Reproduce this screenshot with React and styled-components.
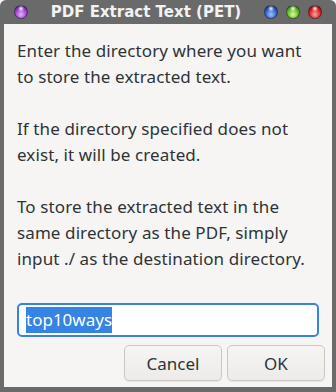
import React from 'react';
import styled, { createGlobalStyle } from 'styled-components';

const GlobalStyle = createGlobalStyle`
  html, body {
    margin: 0;
    padding: 0;
    background: #ffffff;
  }
  #root {
    width: 336px;
    height: 392px;
  }
`;

const Frame = styled.div`
  display: flex;
  flex-direction: column;
  width: 336px;
  height: 392px;
  background: #6a6a6a;
  border-radius: 6px 6px 0 0;
  box-sizing: border-box;
  padding: 0 4px 5px 4px;
`;

const TitleBar = styled.div`
  display: flex;
  align-items: center;
  height: 24px;
  flex-shrink: 0;
  padding: 0 10px 0 10px;
`;

const Title = styled.div`
  flex: 1;
  text-align: center;
  font-family: "DejaVu Sans", sans-serif;
  font-weight: bold;
  font-size: 15px;
  color: #f2f2f2;
  white-space: nowrap;
`;

const Lights = styled.div`
  display: flex;
  gap: 8px;
`;

const palette = {
  purple: ['#e6b3ff', '#9a3fd0', '#4d1470'],
  blue: ['#9fc3ff', '#2f5fc8', '#10266a'],
  green: ['#d8ff9c', '#62b61e', '#2a5a08'],
  red: ['#ffa3a3', '#d71f1f', '#6a0808'],
};

const Light = styled.span`
  display: block;
  flex-shrink: 0;
  width: 14px;
  height: 14px;
  border-radius: 50%;
  box-sizing: border-box;
  border: 1px solid rgba(30, 30, 30, 0.55);
  background:
    radial-gradient(circle at 50% 22%, rgba(255,255,255,0.95) 0, rgba(255,255,255,0.2) 22%, rgba(255,255,255,0) 32%),
    radial-gradient(circle at 50% 70%, ${p => palette[p.$c][0]} 0, ${p => palette[p.$c][1]} 55%, ${p => palette[p.$c][2]} 100%);
`;

const Body = styled.div`
  flex: 1;
  display: flex;
  flex-direction: column;
  background: #f6f5f4;
  padding: 14px 7px 6px 13px;
  font-family: "Noto Sans", "Open Sans", sans-serif;
  color: #2e3436;
`;

const Message = styled.p`
  margin: 0;
  font-size: 17px;
  line-height: 26px;
  letter-spacing: 0.1px;
  white-space: nowrap;
`;

const Field = styled.div`
  margin: 31px 6px 0 0;
  height: 34px;
  box-sizing: border-box;
  border: 2px solid #3584e4;
  border-radius: 5px;
  background: #ffffff;
  display: flex;
  align-items: center;
  padding-left: 7px;
`;

const Selected = styled.span`
  background: #3584e4;
  color: #ffffff;
  font-size: 17px;
  line-height: 26px;
`;

const Actions = styled.div`
  display: flex;
  justify-content: flex-end;
  gap: 5px;
  margin-top: 8px;
`;

const Button = styled.button`
  width: 98px;
  height: 36px;
  box-sizing: border-box;
  border: 1px solid #cdc7c2;
  border-radius: 5px;
  background: linear-gradient(#f6f5f4, #edebe9);
  font-family: "Noto Sans", "Open Sans", sans-serif;
  font-size: 17px;
  color: #2e3436;
  box-shadow: 0 1px 1px rgba(0, 0, 0, 0.07);
`;

const App = () => (
  <>
    <GlobalStyle />
    <Frame>
      <TitleBar>
        <Light $c="purple" />
        <Title>PDF Extract Text (PET)</Title>
        <Lights>
          <Light $c="blue" />
          <Light $c="green" />
          <Light $c="red" />
        </Lights>
      </TitleBar>
      <Body>
        <Message>
          Enter the directory where you want<br />
          to store the extracted text.<br />
          <br />
          If the directory specified does not<br />
          exist, it will be created.<br />
          <br />
          To store the extracted text in the<br />
          same directory as the PDF, simply<br />
          input ./ as the destination directory.
        </Message>
        <Field>
          <Selected>top10ways</Selected>
        </Field>
        <Actions>
          <Button>Cancel</Button>
          <Button>OK</Button>
        </Actions>
      </Body>
    </Frame>
  </>
);

export default App;
